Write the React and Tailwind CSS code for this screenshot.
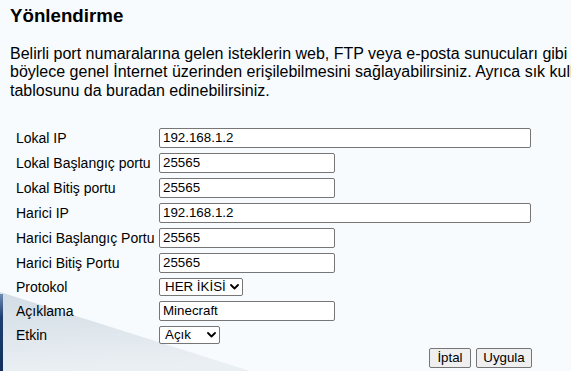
import React from "react";

function Chevron() {
  return (
    <svg width="9" height="6" viewBox="0 0 9 6" className="pointer-events-none absolute right-[4px] top-1/2 -translate-y-1/2">
      <path d="M1 1 L4.5 4.5 L8 1" fill="none" stroke="#000" strokeWidth="1.8" strokeLinecap="round" strokeLinejoin="round" />
    </svg>
  );
}

function Row({ label, children, tall = true }) {
  return (
    <div className={"flex items-center " + (tall ? "h-[25px]" : "h-[23px]")}>
      <div className="w-[159px] pl-[16px] text-[14px] leading-[16px] text-black whitespace-nowrap">{label}</div>
      {children}
    </div>
  );
}

function TextInput({ value, wide }) {
  return (
    <input
      readOnly
      value={value}
      className={
        "h-[20px] border border-[#767676] rounded-[2px] bg-white pl-[3px] pr-[2px] text-[13.333px] text-black outline-none " +
        (wide ? "w-[372px]" : "w-[176px]")
      }
    />
  );
}

function Select({ value, width }) {
  return (
    <div className={"relative h-[18px] " + width}>
      <div className="h-[18px] w-full border border-[#767676] rounded-[2px] bg-white pl-[5px] text-[13.333px] leading-[16px] text-black whitespace-nowrap">
        {value}
      </div>
      <Chevron />
    </div>
  );
}

export default function App() {
  return (
    <div className="relative w-[571px] h-[371px] overflow-hidden bg-[#f7fbfd] font-['Liberation_Sans',Arial,sans-serif] text-black">
      <svg className="absolute inset-0" width="571" height="371" viewBox="0 0 571 371">
        <defs>
          <linearGradient id="g1" x1="0" y1="0" x2="0.15" y2="1">
            <stop offset="0" stopColor="#d2dce5" />
            <stop offset="1" stopColor="#eaeff3" />
          </linearGradient>
          <linearGradient id="g2" x1="0" y1="0" x2="0" y2="1">
            <stop offset="0" stopColor="#6d8db3" />
            <stop offset="0.3" stopColor="#1d3e70" />
            <stop offset="1" stopColor="#14305c" />
          </linearGradient>
        </defs>
        <polygon points="0,292 250,371 0,371" fill="url(#g1)" />
        <rect x="0" y="294" width="3" height="77" fill="url(#g2)" />
      </svg>
      <div className="relative">
        <h3 className="pl-[10px] pt-[5px] text-[18.72px] font-bold leading-[22px]">Yönlendirme</h3>
        <p className="mt-[18px] pl-[10px] text-[16px] leading-[18.4px] whitespace-nowrap">
          Belirli port numaralarına gelen isteklerin web, FTP veya e-posta sunucuları gibi ağınızdaki belirli bir bilgisayara yönlendirilmesini ve
          <br />
          böylece genel İnternet üzerinden erişilebilmesini sağlayabilirsiniz. Ayrıca sık kullanılan uygulamaların port
          <br />
          tablosunu da buradan edinebilirsiniz.
        </p>
        <div className="mt-[25px] flex flex-col">
          <Row label="Lokal IP"><TextInput value="192.168.1.2" wide /></Row>
          <Row label="Lokal Başlangıç portu"><TextInput value="25565" /></Row>
          <Row label="Lokal Bitiş portu"><TextInput value="25565" /></Row>
          <Row label="Harici IP"><TextInput value="192.168.1.2" wide /></Row>
          <Row label="Harici Başlangıç Portu"><TextInput value="25565" /></Row>
          <Row label="Harici Bitiş Portu"><TextInput value="25565" /></Row>
          <Row label="Protokol" tall={false}><Select value="HER İKİSİ" width="w-[84px]" /></Row>
          <Row label="Açıklama"><TextInput value="Minecraft" /></Row>
          <Row label="Etkin" tall={false}><Select value="Açık" width="w-[61px]" /></Row>
          <div className="mt-[2px] flex w-[532px] justify-end gap-[5px]">
            <button className="h-[20px] w-[42px] border border-[#767676] rounded-[2px] bg-[#efefef] text-[13.333px] leading-[16px] text-black">İptal</button>
            <button className="h-[20px] w-[56px] border border-[#767676] rounded-[2px] bg-[#efefef] text-[13.333px] leading-[16px] text-black">Uygula</button>
          </div>
        </div>
      </div>
    </div>
  );
}
